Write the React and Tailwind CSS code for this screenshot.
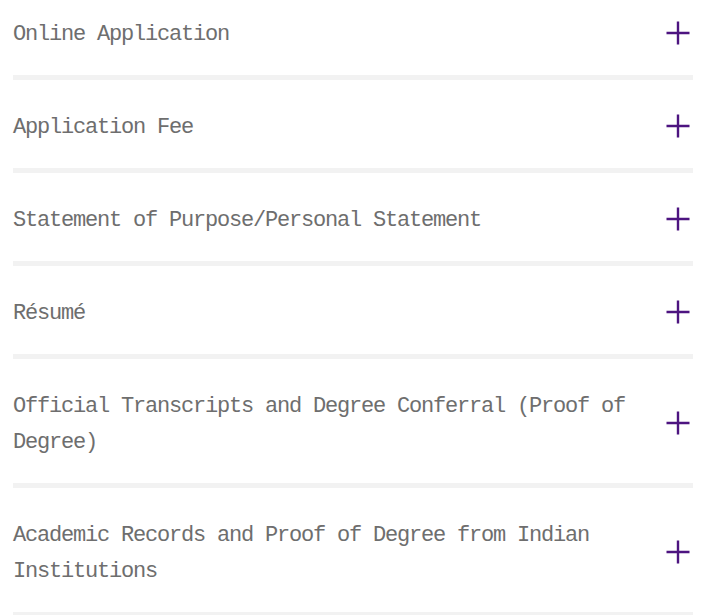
import React from "react";

const items = [
  "Online Application",
  "Application Fee",
  "Statement of Purpose/Personal Statement",
  "Résumé",
  "Official Transcripts and Degree Conferral (Proof of Degree)",
  "Academic Records and Proof of Degree from Indian Institutions",
];

function Plus() {
  return (
    <svg width="24" height="24" viewBox="0 0 24 24" className="shrink-0">
      <path d="M12 0.5V23.5M0.5 12H23.5" stroke="#4d1480" strokeWidth="2.4" fill="none" />
    </svg>
  );
}

export default function App() {
  return (
    <div className="w-[716px] h-[615px] overflow-hidden bg-white">
      <div className="ml-[13px] w-[680px] -mt-[13px]">
        {items.map((t) => (
          <div key={t} className="flex items-center justify-between border-b-[5px] border-[#f2f2f2] pt-[28px] pb-[24px] pr-[3px]">
            <div
              className="w-[640px] pt-[2px] -mb-[2px] text-[22px] leading-[36px] tracking-[-1.2px] text-[#6e6e6e]"
              style={{ fontFamily: '"Liberation Mono", "Noto Sans CJK SC", monospace' }}
            >
              {t}
            </div>
            <Plus />
          </div>
        ))}
      </div>
    </div>
  );
}
